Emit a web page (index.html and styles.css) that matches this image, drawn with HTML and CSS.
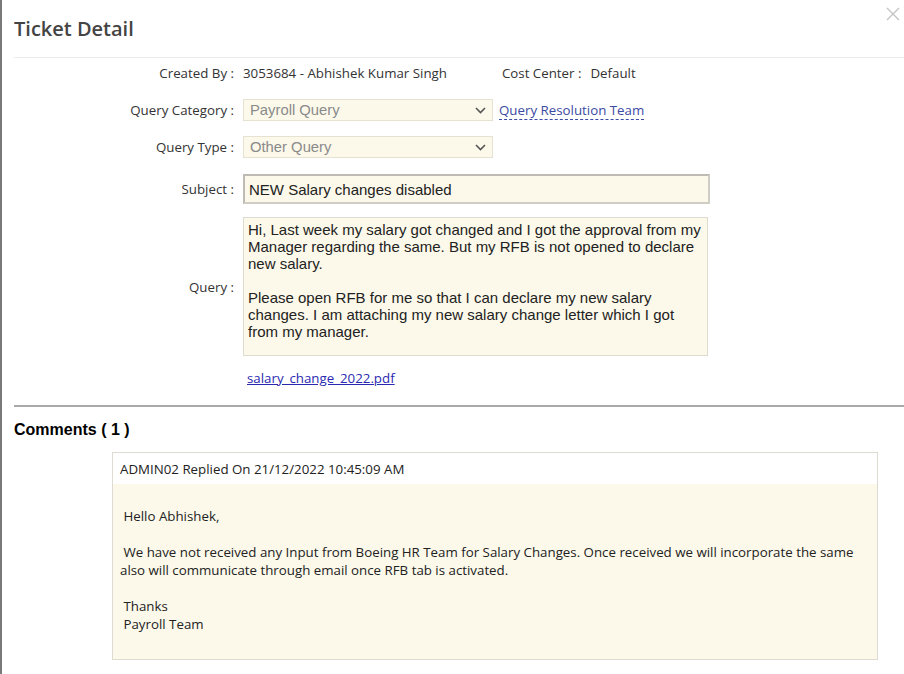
FILE: index.html
```html
<!DOCTYPE html>
<html>
<head>
<meta charset="utf-8">
<link rel="stylesheet" href="styles.css">
</head>
<body>
<div class="modal">
  <div class="modal-header">
    <h1 class="title">Ticket Detail</h1>
    <svg class="close" width="14" height="14" viewBox="0 0 14 14"><path d="M1 1L13 13M13 1L1 13" stroke="#c4c4c4" stroke-width="1.4" fill="none"/></svg>
  </div>
  <div class="form">
    <div class="row row-created">
      <div class="label">Created By :</div>
      <div class="value">3053684 - Abhishek Kumar Singh</div>
      <div class="label cost-label">Cost Center :</div>
      <div class="value">Default</div>
    </div>
    <div class="row row-cat">
      <div class="label">Query Category :</div>
      <div class="select"><span>Payroll Query</span><svg class="chev" width="11" height="7" viewBox="0 0 11 7"><path d="M1 1L5.5 5.5L10 1" stroke="#555" stroke-width="1.6" fill="none"/></svg></div>
      <a class="team-link">Query Resolution Team</a>
    </div>
    <div class="row row-type">
      <div class="label">Query Type :</div>
      <div class="select"><span>Other Query</span><svg class="chev" width="11" height="7" viewBox="0 0 11 7"><path d="M1 1L5.5 5.5L10 1" stroke="#555" stroke-width="1.6" fill="none"/></svg></div>
    </div>
    <div class="row row-subject">
      <div class="label">Subject :</div>
      <div class="input">NEW Salary changes disabled</div>
    </div>
    <div class="row row-query">
      <div class="label">Query :</div>
      <div class="textarea">Hi, Last week my salary got changed and I got the approval from my Manager regarding the same. But my RFB is not opened to declare new salary.<br><br>Please open RFB for me so that I can declare my new salary changes. I am attaching my new salary change letter which I got from my manager.</div>
    </div>
    <div class="row row-file">
      <div class="label"></div>
      <a class="file-link">salary_change_2022.pdf</a>
    </div>
  </div>
  <div class="divider"></div>
  <h2 class="comments-title">Comments ( 1 )</h2>
  <div class="comment">
    <div class="comment-head">ADMIN02 Replied On 21/12/2022 10:45:09 AM</div>
    <div class="comment-body">&nbsp;Hello Abhishek,<br><br>&nbsp;We have not received any Input from Boeing HR Team for Salary Changes. Once received we will incorporate the same also will communicate through email once RFB tab is activated.<br><br>&nbsp;Thanks<br>&nbsp;Payroll Team</div>
  </div>
</div>
</body>
</html>
```
FILE: styles.css
```css
html, body {
  margin: 0;
  padding: 0;
  background: #fff;
}
body {
  font-family: "Open Sans", "Liberation Sans", sans-serif;
  color: #333;
  font-size: 13.3px;
}
.modal {
  border-left: 2px solid #7a7a7a;
  min-height: 674px;
  box-sizing: border-box;
}
.modal-header {
  position: relative;
  margin-left: 12px;
  height: 57px;
  border-bottom: 1px solid #ececec;
  display: flex;
  align-items: center;
}
.title {
  margin: 0;
  font-size: 20px;
  font-weight: 600;
  color: #444;
  line-height: 28px;
}
.close {
  position: absolute;
  right: 4px;
  top: 7px;
}
.form {
  padding-top: 5px;
}
.row {
  display: flex;
  align-items: center;
}
.label {
  width: 232px;
  flex: none;
  text-align: right;
  color: #333;
  line-height: 20px;
}
.value {
  margin-left: 9px;
  line-height: 20px;
  color: #333;
}
.cost-label {
  width: auto;
  margin-left: 55px;
}
.row-cat { margin-top: 16px; }
.row-type { margin-top: 15px; }
.row-subject { margin-top: 16px; }
.row-query { margin-top: 13px; }
.row-file { margin-top: 13px; }
.select {
  margin-left: 9px;
  width: 250px;
  height: 22px;
  box-sizing: border-box;
  border: 1px solid #e6e2d2;
  background: #fcf9ea;
  display: flex;
  align-items: center;
  justify-content: space-between;
  padding: 0 6px 0 6px;
  font-family: "Liberation Sans", Arial, sans-serif;
  font-size: 14.8px;
  color: #8a8a8a;
}
.chev { flex: none; }
.team-link {
  margin-left: 6px;
  color: #3b4aa3;
  border-bottom: 1px dashed #3b4aa3;
  line-height: 17px;
  margin-top: 2px;
}
.input {
  margin-left: 9px;
  width: 467px;
  height: 30px;
  box-sizing: border-box;
  border: 2px solid #cfcdc4;
  border-top-color: #bdbbb3;
  border-left-color: #bdbbb3;
  background: #fcf9ea;
  padding: 0 4px;
  display: flex;
  align-items: center;
  font-family: "Liberation Sans", Arial, sans-serif;
  font-size: 15px;
  color: #222;
}
.textarea {
  margin-left: 9px;
  width: 465px;
  height: 139px;
  box-sizing: border-box;
  border: 1px solid #dedbd0;
  background: #fcf9ea;
  padding: 3px 4px;
  font-family: "Liberation Sans", Arial, sans-serif;
  font-size: 15px;
  line-height: 17px;
  color: #222;
}
.file-link {
  margin-left: 13px;
  color: #2a2ab0;
  text-decoration: underline;
  line-height: 18px;
}
.divider {
  margin: 18px 0 0 12px;
  border-top: 2px solid #a9a9a9;
}
.comments-title {
  margin: 14px 0 0 12px;
  font-family: "Liberation Sans", Arial, sans-serif;
  font-weight: bold;
  font-size: 16px;
  line-height: 18px;
  color: #000;
}
.comment {
  margin: 13px 0 0 110px;
  width: 764px;
  border: 1px solid #dddbd2;
}
.comment-head {
  height: 31px;
  background: #fff;
  padding: 0 7px;
  display: flex;
  align-items: center;
  color: #222;
  font-weight: 500;
}
.comment-body {
  background: #fcf9ea;
  padding: 23px 10px 26px 7px;
  line-height: 18px;
  color: #222;
}
```
